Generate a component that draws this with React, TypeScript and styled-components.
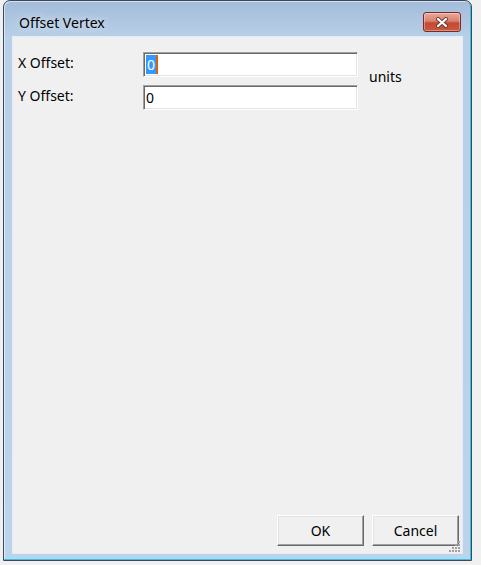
import styled, { createGlobalStyle } from 'styled-components';

const GlobalStyle = createGlobalStyle`
  html, body {
    margin: 0;
    padding: 0;
    background: #f0f0f0;
    font-family: "Noto Sans", "Open Sans", "Liberation Sans", sans-serif;
  }
`;

const Desktop = styled.div`
  width: 481px;
  height: 565px;
  overflow: hidden;
  display: flex;
  align-items: flex-start;
  padding-left: 3px;
  box-sizing: border-box;
  background: #f0f0f0;
`;

const Window = styled.div`
  width: 469px;
  height: 561px;
  box-sizing: border-box;
  display: flex;
  flex-direction: column;
  padding: 0 8px 6px 8px;
  border: 1px solid #3a4a5c;
  border-radius: 7px 7px 0 0;
  background: linear-gradient(to bottom, #a3bcd9 0px, #b8cfe8 36px, #bcd3ec 100%);
  box-shadow: inset -1px -1px 0 #2fc4e6, inset 1px 1px 0 rgba(255, 255, 255, 0.55);
`;

const TitleBar = styled.div`
  height: 35px;
  flex-shrink: 0;
  display: flex;
  align-items: center;
  justify-content: space-between;
  padding: 7px 2px 0 7px;
  box-sizing: border-box;
`;

const Title = styled.span`
  font-size: 14px;
  color: #000;
  text-shadow: 0 0 8px rgba(255, 255, 255, 0.9);
`;

const CloseButton = styled.div`
  width: 38px;
  height: 20px;
  box-sizing: border-box;
  border: 1px solid #7a2a20;
  border-radius: 3px;
  background: linear-gradient(to bottom, #e9a99b 0%, #d9826f 45%, #c44a35 55%, #c9583f 100%);
  box-shadow: inset 0 0 0 1px rgba(255, 255, 255, 0.35);
  display: flex;
  align-items: center;
  justify-content: center;
`;

const Client = styled.div`
  flex: 1;
  position: relative;
  display: flex;
  flex-direction: column;
  background: #f0f0f0;
  border: 1px solid #e4edf7;
  padding: 15px 3px 7px 5px;
`;

const Form = styled.div`
  display: grid;
  grid-template-columns: 125px 215px auto;
  grid-template-rows: 25px 25px;
  row-gap: 8px;
  align-items: center;
`;

const Label = styled.span`
  font-size: 14px;
  color: #000;
  margin-top: -4px;
`;

const Field = styled.div`
  height: 25px;
  box-sizing: border-box;
  background: #fff;
  border-style: solid;
  border-width: 1px;
  border-color: #a0a0a0 #ffffff #ffffff #a0a0a0;
  box-shadow: inset 1px 1px 0 #696969, inset -1px -1px 0 #e3e3e3;
  padding: 0 0 0 2px;
  display: flex;
  align-items: center;
  font-size: 14px;
  color: #000;
`;

const Selected = styled.span`
  background: #3399ff;
  color: #fff;
  padding: 0 1px;
  line-height: 19px;
  border-right: 2px solid #d8620e;
`;

const Units = styled.span`
  grid-column: 3;
  grid-row: 1 / span 2;
  margin: -9px 0 0 11px;
  font-size: 14px;
  color: #000;
`;

const Spacer = styled.div`
  flex: 1;
`;

const ButtonRow = styled.div`
  display: flex;
  justify-content: flex-end;
  gap: 8px;
`;

const Button = styled.div`
  width: 87px;
  height: 31px;
  box-sizing: border-box;
  display: flex;
  align-items: center;
  justify-content: center;
  font-size: 14px;
  color: #000;
  background: #f0f0f0;
  border-style: solid;
  border-width: 1px;
  border-color: #ffffff #696969 #696969 #ffffff;
  box-shadow: inset -1px -1px 0 #a0a0a0, inset 1px 1px 0 #e3e3e3;
`;

const Grip = styled.svg`
  position: absolute;
  right: 1px;
  bottom: 1px;
`;

export default function App() {
  return (
    <Desktop>
      <GlobalStyle />
      <Window>
        <TitleBar>
          <Title>Offset Vertex</Title>
          <CloseButton>
            <svg width="14" height="11" viewBox="0 0 14 11">
              <path d="M3 2 L11 9 M11 2 L3 9" stroke="#6b3a32" strokeWidth="4" strokeLinecap="round" />
              <path d="M3 2 L11 9 M11 2 L3 9" stroke="#ffffff" strokeWidth="2.2" strokeLinecap="round" />
            </svg>
          </CloseButton>
        </TitleBar>
        <Client>
          <Form>
            <Label>X Offset:</Label>
            <Field>
              <Selected>0</Selected>
            </Field>
            <Units>units</Units>
            <Label>Y Offset:</Label>
            <Field>0</Field>
          </Form>
          <Spacer />
          <ButtonRow>
            <Button>OK</Button>
            <Button>Cancel</Button>
          </ButtonRow>
          <Grip width="12" height="12" viewBox="0 0 12 12">
            <g fill="#a0a0a0">
              <rect x="9" y="1" width="2" height="2" />
              <rect x="6" y="4" width="2" height="2" />
              <rect x="9" y="4" width="2" height="2" />
              <rect x="3" y="7" width="2" height="2" />
              <rect x="6" y="7" width="2" height="2" />
              <rect x="9" y="7" width="2" height="2" />
              <rect x="0" y="10" width="2" height="2" />
              <rect x="3" y="10" width="2" height="2" />
              <rect x="6" y="10" width="2" height="2" />
              <rect x="9" y="10" width="2" height="2" />
            </g>
          </Grip>
        </Client>
      </Window>
    </Desktop>
  );
}
